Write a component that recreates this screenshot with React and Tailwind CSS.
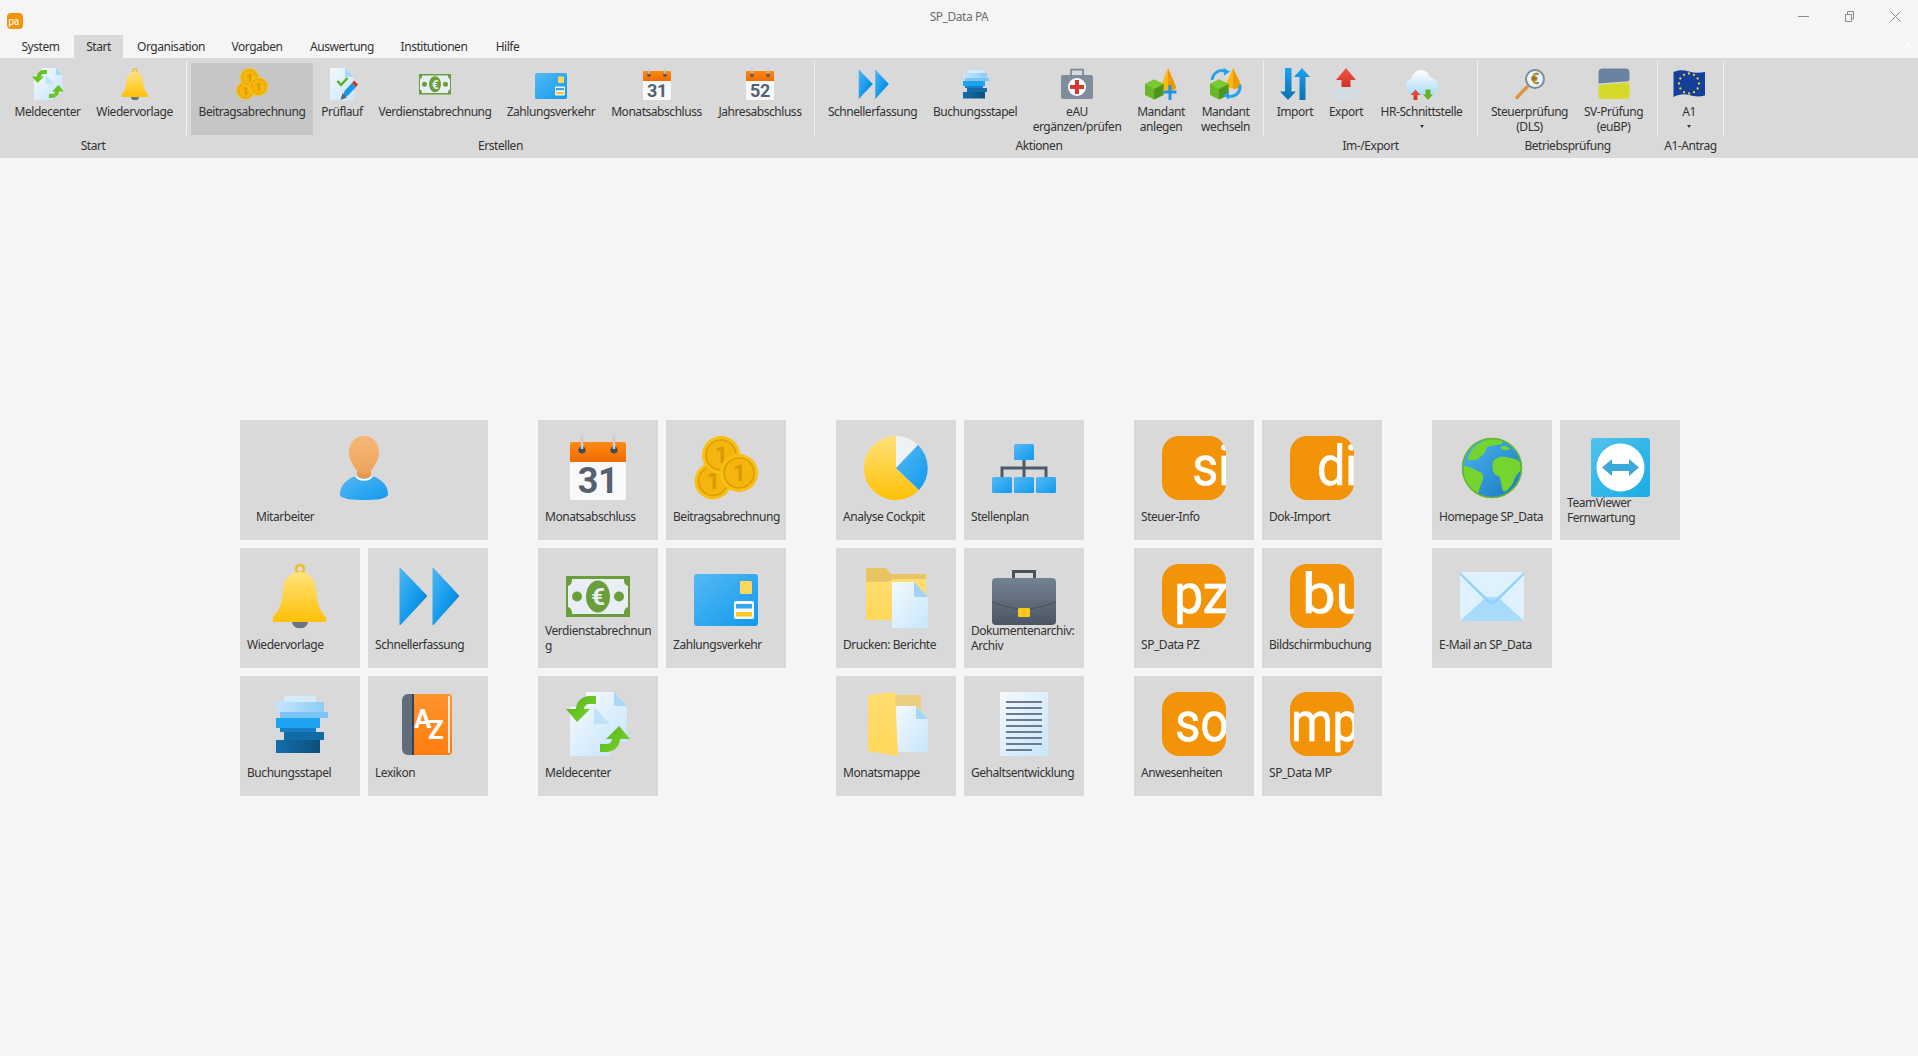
import React from "react";

const Svg = ({ size = 64, children }) => (
  <svg viewBox="0 0 64 64" className={size === 32 ? "w-8 h-8 shrink-0" : "w-16 h-16 shrink-0"}>
    {children}
  </svg>
);

const Defs = () => (
  <svg className="absolute w-0 h-0">
    <defs>
      <linearGradient id="gBlue" x1="0" y1="0" x2="1" y2="1"><stop offset="0" stopColor="#55b9f4" /><stop offset="1" stopColor="#1199ee" /></linearGradient>
      <linearGradient id="gChev" x1="0" y1="0" x2="1" y2="1"><stop offset="0" stopColor="#4fb6f2" /><stop offset="0.55" stopColor="#129aec" /><stop offset="1" stopColor="#0b6fae" /></linearGradient>
      <linearGradient id="gBlueV" x1="0" y1="0" x2="0" y2="1"><stop offset="0" stopColor="#1ba3f0" /><stop offset="1" stopColor="#0c6fb0" /></linearGradient>
      <linearGradient id="gSkin" x1="0" y1="0" x2="0" y2="1"><stop offset="0" stopColor="#f6b877" /><stop offset="1" stopColor="#f0a35c" /></linearGradient>
      <linearGradient id="gBell" x1="0" y1="0" x2="0" y2="1"><stop offset="0" stopColor="#ffe27a" /><stop offset="1" stopColor="#ffc107" /></linearGradient>
      <linearGradient id="gDoc" x1="0" y1="0" x2="1" y2="1"><stop offset="0" stopColor="#f3f9fe" /><stop offset="1" stopColor="#c8e6fb" /></linearGradient>
      <linearGradient id="gFolder" x1="0" y1="0" x2="0" y2="1"><stop offset="0" stopColor="#ffdd70" /><stop offset="1" stopColor="#ffd75a" /></linearGradient>
      <linearGradient id="gGreen" x1="0" y1="0" x2="1" y2="1"><stop offset="0" stopColor="#4fb31a" /><stop offset="1" stopColor="#82d62c" /></linearGradient>
      <linearGradient id="gBook" x1="0" y1="0" x2="0" y2="1"><stop offset="0" stopColor="#ff9430" /><stop offset="1" stopColor="#ff7d0c" /></linearGradient>
      <linearGradient id="gCase" x1="0" y1="0" x2="0" y2="1"><stop offset="0" stopColor="#758292" /><stop offset="1" stopColor="#4b5663" /></linearGradient>
      <linearGradient id="gCloud" x1="0" y1="0" x2="0" y2="1"><stop offset="0" stopColor="#ffffff" /><stop offset="1" stopColor="#a9dcfb" /></linearGradient>
      <linearGradient id="gRed" x1="0" y1="0" x2="0" y2="1"><stop offset="0" stopColor="#f0584c" /><stop offset="1" stopColor="#cf3027" /></linearGradient>
      <linearGradient id="gStackA" x1="0" y1="0" x2="1" y2="0"><stop offset="0" stopColor="#c4e6fc" /><stop offset="1" stopColor="#8ccdf6" /></linearGradient>
      <linearGradient id="gStackB" x1="0" y1="0" x2="1" y2="0"><stop offset="0" stopColor="#126fab" /><stop offset="1" stopColor="#0d4f7d" /></linearGradient>
      <linearGradient id="gGlobe" x1="0" y1="0" x2="1" y2="1"><stop offset="0" stopColor="#4db5f2" /><stop offset="1" stopColor="#1778bd" /></linearGradient>
      <linearGradient id="gTv" x1="0" y1="0" x2="1" y2="1"><stop offset="0" stopColor="#52c2ef" /><stop offset="1" stopColor="#17ace5" /></linearGradient>
      <linearGradient id="gOrangeTop" x1="0" y1="0" x2="0" y2="1"><stop offset="0" stopColor="#fb8a12" /><stop offset="1" stopColor="#f26b00" /></linearGradient>
      <clipPath id="clipLogo"><rect width="64" height="64" rx="17" /></clipPath>
    </defs>
  </svg>
);

const Person = (p) => (
  <Svg {...p}>
    <path d="M24 40C14 43 8 50 8 58C8 63 20 64 32 64C44 64 56 63 56 58C56 50 50 43 40 40Z" fill="url(#gBlue)" />
    <path d="M24 40C27 45 37 45 40 40" fill="none" stroke="#fff" strokeWidth="2" />
    <path d="M25 28H39V40C36 43 28 43 25 40Z" fill="#e8994f" />
    <path d="M32 0C41 0 47 7 47 17C47 25 42 30 38 36C35 38 29 38 26 36C22 30 17 25 17 17C17 7 23 0 32 0Z" fill="url(#gSkin)" />
  </Svg>
);

const Calendar = ({ num = "31", ...p }) => (
  <Svg {...p}>
    <rect x="4" y="6" width="56" height="58" rx="2" fill="#f7f9fb" />
    <path d="M4 26V8a2 2 0 0 1 2-2H58a2 2 0 0 1 2 2V26Z" fill="url(#gOrangeTop)" />
    <circle cx="16" cy="14" r="3.5" fill="#3f4a57" />
    <circle cx="48" cy="14" r="3.5" fill="#3f4a57" />
    <path d="M16 0V13M48 0V13" stroke="#c3ccd6" strokeWidth="2.5" />
    <text x="32" y="57" textAnchor="middle" fontFamily="Roboto, sans-serif" fontWeight="700" fontSize="36" fill="#56616f">{num}</text>
  </Svg>
);

const Coin = ({ cx, cy, r }) => (
  <g>
    <circle cx={cx} cy={cy} r={r} fill="#f8bf14" />
    <circle cx={cx} cy={cy} r={r - 4} fill="#f5b50c" stroke="#dc9d02" strokeWidth="1.6" />
    <text x={cx} y={cy + 8} textAnchor="middle" fontFamily="Roboto, sans-serif" fontWeight="700" fontSize="23" fill="#d89a00">1</text>
  </g>
);

const Coins = (p) => (
  <Svg {...p}>
    <Coin cx={19} cy={45} r={18.5} />
    <Coin cx={27} cy={19} r={19} />
    <Coin cx={45} cy={37} r={19} />
  </Svg>
);

const Bell = (p) => (
  <Svg {...p}>
    <path d="M24 58a8 6.5 0 0 0 16 0Z" fill="#68747f" />
    <circle cx="32" cy="5" r="4" fill="none" stroke="#f6bd1a" strokeWidth="2.5" />
    <path d="M32 8C22 8 16 15 15 26C14 38 12 46 5 53V58H58V53C51 46 49 38 48 26C47 15 41 8 32 8Z" fill="url(#gBell)" />
  </Svg>
);

const Chevrons = (p) => (
  <Svg {...p}>
    <path d="M4 4L31 32L4 61Z" fill="url(#gChev)" stroke="url(#gChev)" strokeWidth="1" strokeLinejoin="round" />
    <path d="M37 4L63 32L37 61Z" fill="url(#gChev)" stroke="url(#gChev)" strokeWidth="1" strokeLinejoin="round" />
  </Svg>
);

const Banknote = (p) => (
  <Svg {...p}>
    <rect x="0" y="12" width="64" height="41" fill="#6a9e3a" />
    <path d="M6 15H58C58 19 59 21 62 22V43C59 44 58 46 58 50H6C6 46 5 44 2 43V22C5 21 6 19 6 15Z" fill="#e8eef3" />
    <ellipse cx="32" cy="32.5" rx="12" ry="16" fill="#699f3a" />
    <circle cx="11" cy="32.5" r="5" fill="#699f3a" />
    <circle cx="53" cy="32.5" r="5" fill="#699f3a" />
    <text x="32" y="41" textAnchor="middle" fontFamily="Roboto, sans-serif" fontWeight="700" fontSize="24" fill="#e8eef3">€</text>
  </Svg>
);

const Card = (p) => (
  <Svg {...p}>
    <rect x="0" y="10" width="64" height="52" rx="3" fill="url(#gBlue)" />
    <rect x="46" y="17" width="12" height="13" rx="1.5" fill="#ffd65c" />
    <rect x="40" y="37" width="20" height="18" rx="2" fill="#f2f8fd" />
    <rect x="42" y="40" width="16" height="4.5" fill="#39a7ee" />
    <rect x="42" y="48" width="16" height="4.5" fill="#ffc828" />
  </Svg>
);

const Stack = (p) => (
  <Svg {...p}>
    <rect x="16" y="4" width="32" height="7" fill="#d3ecfc" />
    <rect x="8" y="10" width="48" height="10" fill="url(#gStackA)" />
    <rect x="12" y="20" width="48" height="6" fill="#7cc6f7" />
    <rect x="8" y="26" width="44" height="10" fill="#1ea3f1" />
    <rect x="12" y="36" width="36" height="4" fill="#157fc6" />
    <rect x="16" y="40" width="40" height="8" fill="#136aa5" />
    <rect x="8" y="48" width="44" height="13" fill="url(#gStackB)" />
  </Svg>
);

const Book = (p) => (
  <Svg {...p}>
    <path d="M12 2H18V63H12A6 6 0 0 1 6 57V8A6 6 0 0 1 12 2Z" fill="#5f6d7c" />
    <rect x="16" y="2" width="2.5" height="61" fill="#39424d" />
    <path d="M18 2H52A4 4 0 0 1 56 6V59A4 4 0 0 1 52 63H18Z" fill="url(#gBook)" />
    <rect x="52" y="4" width="2" height="57" fill="#f5ece2" />
    <text x="18" y="36" fontFamily="Roboto, sans-serif" fontWeight="700" fontSize="26" fill="#fff">A</text>
    <text x="32" y="47" fontFamily="Roboto, sans-serif" fontWeight="700" fontSize="26" fill="#fff">Z</text>
  </Svg>
);

const Meldecenter = (p) => (
  <Svg {...p}>
    <path d="M20 0H48L61 14V50H20Z" fill="url(#gDoc)" />
    <path d="M48 0L61 14H48Z" fill="#a7d8f8" />
    <path d="M4 15H28L44 32V64H4Z" fill="url(#gDoc)" />
    <path d="M28 15L44 32H28Z" fill="#bfe2fa" />
    <path d="M30 4H24C16 4 10 10 10 17H0L11 30L24 17H18C18 14 20 12 24 12H30Z" fill="url(#gGreen)" />
    <path d="M34 60H40C48 60 54 54 54 47H64L53 34L40 47H46C46 50 44 52 40 52H34Z" fill="url(#gGreen)" />
  </Svg>
);

const Pie = (p) => (
  <Svg {...p}>
    <path d="M32 32L32 0A32 32 0 1 0 55 54Z" fill="url(#gBell)" />
    <path d="M32 32L32 0A32 32 0 0 1 54 9Z" fill="#edf2f7" />
    <path d="M32 32L54 9A32 32 0 0 1 55 54Z" fill="url(#gBlue)" />
  </Svg>
);

const OrgChart = (p) => (
  <Svg {...p}>
    <path d="M32 24V41M10 41V32H54V41" fill="none" stroke="#4a5a6a" strokeWidth="3" />
    <rect x="22" y="8" width="20" height="16" rx="1.5" fill="url(#gBlue)" />
    <rect x="0" y="41" width="20" height="16" rx="1.5" fill="url(#gBlue)" />
    <rect x="22" y="41" width="20" height="16" rx="1.5" fill="url(#gBlue)" />
    <rect x="44" y="41" width="20" height="16" rx="1.5" fill="url(#gBlue)" />
  </Svg>
);

const FolderDoc = (p) => (
  <Svg {...p}>
    <path d="M2 4H22L27 10H62V56H2Z" fill="#e9c463" />
    <path d="M2 18H24L29 15H62V56H2Z" fill="url(#gFolder)" />
    <path d="M28 18H50L64 33V64H28Z" fill="url(#gDoc)" />
    <path d="M50 18L64 33H50Z" fill="#9fd4f7" />
  </Svg>
);

const Briefcase = (p) => (
  <Svg {...p}>
    <path d="M21.5 15V7.5H42.5V15" fill="none" stroke="#46535f" strokeWidth="3" />
    <rect x="0" y="14" width="64" height="47" rx="4" fill="url(#gCase)" />
    <path d="M0 38C14 43 24 45 32 45C40 45 50 43 64 38" fill="none" stroke="#434e5a" strokeWidth="1" />
    <rect x="26" y="44" width="12" height="9" rx="1" fill="#ffc61a" />
  </Svg>
);

const FolderOpen = (p) => (
  <Svg {...p}>
    <path d="M30 3H57V40H30Z" fill="#ebcf7e" />
    <path d="M31 14H52L64 27V60H31Z" fill="url(#gDoc)" />
    <path d="M52 14L64 27H52Z" fill="#a4d6f8" />
    <path d="M4 3L31 0L34 64L4 59Z" fill="url(#gFolder)" />
  </Svg>
);

const Paper = (p) => (
  <Svg {...p}>
    <rect x="8" y="0" width="48" height="64" fill="url(#gDoc)" />
    {[9, 15, 21, 27, 33, 39, 45, 51].map((y) => (
      <rect key={y} x="14" y={y} width="36" height="2" fill="#6c7c8c" />
    ))}
    <rect x="14" y="57" width="26" height="2" fill="#6c7c8c" />
  </Svg>
);

const Logo = ({ text, x, w, ...p }) => (
  <Svg {...p}>
    <g clipPath="url(#clipLogo)">
      <rect width="64" height="64" fill="#f39408" />
      <text x={x} y="49" textLength={w} lengthAdjust="spacingAndGlyphs" fontFamily="Roboto, sans-serif" fontSize="56" fill="#fff" stroke="#fff" strokeWidth="0.6">{text}</text>
    </g>
  </Svg>
);

const Globe = (p) => (
  <Svg {...p}>
    <circle cx="32" cy="32" r="30" fill="url(#gGlobe)" />
    <g fill="#76d42e">
      <path d="M12 14C18 6 30 1 42 4C44 7 40 9 36 9C32 10 28 9 26 13C26 17 22 19 18 23C14 25 10 23 8 25C8 20 10 17 12 14Z" />
      <path d="M33 26C35 22 41 20 46 21C50 22 56 22 60 26L61 34C57 38 55 41 53 47C50 52 46 57 43 55C41 50 41 44 39 40C35 40 31 36 33 26Z" />
      <path d="M4 30C8 30 14 33 20 36C24 38 24 42 22 46C20 50 19 54 18 58C12 55 6 48 3 38Z" />
      <path d="M40 11C44 9 48 10 50 13C46 15 42 15 40 11Z" />
    </g>
    <circle cx="32" cy="32" r="29.5" fill="none" stroke="#68b829" strokeWidth="1.5" />
  </Svg>
);

const TeamViewer = (p) => (
  <Svg {...p}>
    <rect x="3" y="2" width="59" height="59" rx="3" fill="url(#gTv)" />
    <circle cx="32.5" cy="31.5" r="24" fill="#fff" />
    <path d="M14 31.5L24 23V28H41V23L51 31.5L41 40V35H24V40Z" fill="#3aa9d8" />
  </Svg>
);

const Mail = (p) => (
  <Svg {...p}>
    <rect x="0" y="8" width="64" height="49" rx="1" fill="#dff1fd" />
    <path d="M0 57L26 33H38L64 57Z" fill="#a9dcfb" />
    <path d="M0 8L28 35Q32 38 36 35L64 8V11L37 38Q32 42 27 38L0 11Z" fill="#93d1f8" />
  </Svg>
);

const Check = (p) => (
  <Svg {...p}>
    <path d="M8 0H38L56 18V64H8Z" fill="url(#gDoc)" />
    <path d="M38 0L56 18H38Z" fill="#a7d8f8" />
    <path d="M23 26L30 34L43 20" fill="none" stroke="#55b31c" strokeWidth="5" />
    <path d="M32 62L37 46L52 30L60 38L45 54Z" fill="#1a96e6" />
    <path d="M52 30L56 25L64 33L60 38Z" fill="#cf3027" />
    <path d="M29 64L33 50L42 59Z" fill="#5a6673" />
  </Svg>
);

const Medkit = (p) => (
  <Svg {...p}>
    <path d="M20 15V3H44V15" fill="none" stroke="#7b8896" strokeWidth="3.5" />
    <rect x="0" y="14" width="64" height="48" rx="4" fill="#7f8c9b" />
    <circle cx="32" cy="38" r="18" fill="#fff" />
    <path d="M28 24H36V34H46V42H36V52H28V42H18V34H28Z" fill="#d8352c" />
  </Svg>
);

const Cube = () => (
  <g>
    <path d="M0 32L18 23L37 32V54L18 63L0 54Z" fill="#6ab82a" />
    <path d="M18 42L37 32V54L18 63Z" fill="#4f9420" />
    <path d="M0 32L18 23L37 32L18 42Z" fill="#79c92f" />
  </g>
);

const MandantNew = (p) => (
  <Svg {...p}>
    <path d="M46 0L63 40Q50 50 30 40Z" fill="#fdb90f" />
    <path d="M46 0L63 40Q56 46 46 46Z" fill="#ee9a05" />
    <Cube />
    <path d="M47 34H53V45H63V51H53V64H47V51H38V45H47Z" fill="#1a96e6" />
  </Svg>
);

const MandantSwap = (p) => (
  <Svg {...p}>
    <path d="M46 0L63 36Q50 46 30 36Z" fill="#fdb90f" />
    <path d="M46 0L63 36Q56 42 46 42Z" fill="#ee9a05" />
    <path d="M4 24C6 10 18 2 30 6" fill="none" stroke="#27a3ee" strokeWidth="6" />
    <path d="M27 0L40 7L28 15Z" fill="#27a3ee" />
    <Cube />
    <path d="M60 34C62 48 50 60 36 56" fill="none" stroke="#27a3ee" strokeWidth="6" />
    <path d="M38 48L26 55L38 63Z" fill="#27a3ee" />
  </Svg>
);

const ImportArrows = (p) => (
  <Svg {...p}>
    <path d="M12 0H25V47H34L18 64L2 47H12Z" fill="url(#gBlueV)" />
    <path d="M46 0L62 18H53V64H41V18H30Z" fill="url(#gBlueV)" />
  </Svg>
);

const ExportArrow = (p) => (
  <Svg {...p}>
    <rect x="8" y="41" width="48" height="23" fill="#d2dde6" />
    <path d="M32 0L52 24H41V38H23V24H12Z" fill="url(#gRed)" />
  </Svg>
);

const Cloud = (p) => (
  <Svg {...p}>
    <path d="M16 54C6 54 0 46 0 36C0 28 5 23 11 22C12 12 20 4 30 4C39 4 46 10 48 19C57 19 64 27 64 36C64 46 57 54 50 54Z" fill="url(#gCloud)" />
    <path d="M19 43L29 54H23V64H15V54H9Z" fill="url(#gRed)" />
    <path d="M39 43H49V53H54L44 64L34 53H39Z" fill="#62b51f" />
  </Svg>
);

const Lens = (p) => (
  <Svg {...p}>
    <path d="M6 59L26 38" stroke="#e0933f" strokeWidth="7" strokeLinecap="round" />
    <circle cx="42" cy="22" r="18" fill="#e9f4fc" stroke="#7a8b9b" strokeWidth="4" />
    <text x="42" y="32" textAnchor="middle" fontFamily="Roboto, sans-serif" fontWeight="700" fontSize="28" fill="#f3b40f" stroke="#4a3c10" strokeWidth="0.8">€</text>
  </Svg>
);

const SvBlocks = (p) => (
  <Svg {...p}>
    <path d="M9 1H55A8 8 0 0 1 63 9V24A8 8 0 0 1 55 27L1 31V9A8 8 0 0 1 9 1Z" fill="#6a83a3" />
    <path d="M9 33L63 29V54A8 8 0 0 1 55 62H9A8 8 0 0 1 1 54V41A8 8 0 0 1 9 33Z" fill="#d4d92a" />
  </Svg>
);

const Flag = (p) => (
  <Svg {...p}>
    <path d="M1 8C12 3 22 4 32 7C42 10 52 10 64 8V55C52 58 42 57 32 54C22 51 12 52 1 58Z" fill="#15409a" />
    {Array.from({ length: 12 }, (_, i) => {
      const a = (i * Math.PI) / 6;
      return <circle key={i} cx={32 + 20 * Math.sin(a)} cy={31 - 20 * Math.cos(a)} r="2.3" fill="#f5cf2c" />;
    })}
  </Svg>
);

const ribbon = [
  {
    label: "Start",
    w: "w-[186px]",
    pl: "pl-[7px]",
    items: [
      { lines: ["Meldecenter"], icon: Meldecenter, w: "w-[81px]" },
      { lines: ["Wiedervorlage"], icon: Bell, w: "w-[93px]" },
    ],
  },
  {
    label: "Erstellen",
    w: "w-[627px]",
    pl: "pl-[4px]",
    items: [
      { lines: ["Beitragsabrechnung"], icon: Coins, w: "w-[122px]", active: true },
      { lines: ["Prüflauf"], icon: Check, w: "w-[58px]" },
      { lines: ["Verdienstabrechnung"], icon: Banknote, w: "w-[128px]" },
      { lines: ["Zahlungsverkehr"], icon: Card, w: "w-[104px]" },
      { lines: ["Monatsabschluss"], icon: Calendar, w: "w-[107px]" },
      { lines: ["Jahresabschluss"], icon: Calendar, num: "52", w: "w-[100px]" },
    ],
  },
  {
    label: "Aktionen",
    w: "w-[448px]",
    pl: "pl-[5px]",
    items: [
      { lines: ["Schnellerfassung"], icon: Chevrons, w: "w-[105px]" },
      { lines: ["Buchungsstapel"], icon: Stack, w: "w-[100px]" },
      { lines: ["eAU", "ergänzen/prüfen"], icon: Medkit, w: "w-[104px]" },
      { lines: ["Mandant", "anlegen"], icon: MandantNew, w: "w-[64px]" },
      { lines: ["Mandant", "wechseln"], icon: MandantSwap, w: "w-[65px]" },
    ],
  },
  {
    label: "Im-/Export",
    w: "w-[213px]",
    pl: "pl-[5px]",
    items: [
      { lines: ["Import"], icon: ImportArrows, w: "w-[52px]" },
      { lines: ["Export"], icon: ExportArrow, w: "w-[50px]" },
      { lines: ["HR-Schnittstelle"], icon: Cloud, w: "w-[101px]", caret: true },
    ],
  },
  {
    label: "Betriebsprüfung",
    w: "w-[179px]",
    pl: "pl-[6px]",
    items: [
      { lines: ["Steuerprüfung", "(DLS)"], icon: Lens, w: "w-[91px]" },
      { lines: ["SV-Prüfung", "(euBP)"], icon: SvBlocks, w: "w-[77px]" },
    ],
  },
  {
    label: "A1-Antrag",
    w: "w-[65px]",
    pl: "pl-[4px]",
    items: [{ lines: ["A1"], icon: Flag, w: "w-[54px]", caret: true }],
  },
];

const tabs = [
  { label: "System", w: "w-[67px]" },
  { label: "Start", w: "w-[49px]", active: true },
  { label: "Organisation", w: "w-[96px]" },
  { label: "Vorgaben", w: "w-[76px]" },
  { label: "Auswertung", w: "w-[94px]" },
  { label: "Institutionen", w: "w-[90px]" },
  { label: "Hilfe", w: "w-[57px]" },
];

const logo = (text, x, w) => (p) => <Logo text={text} x={x} w={w} {...p} />;

const tileGroups = [
  [
    { label: "Mitarbeiter", icon: Person, wide: true },
    { label: "Wiedervorlage", icon: Bell },
    { label: "Schnellerfassung", icon: Chevrons },
    { label: "Buchungsstapel", icon: Stack },
    { label: "Lexikon", icon: Book },
  ],
  [
    { label: "Monatsabschluss", icon: Calendar },
    { label: "Beitragsabrechnung", icon: Coins },
    { label: "Verdienstabrechnung", icon: Banknote, breakWord: true },
    { label: "Zahlungsverkehr", icon: Card },
    { label: "Meldecenter", icon: Meldecenter },
  ],
  [
    { label: "Analyse Cockpit", icon: Pie },
    { label: "Stellenplan", icon: OrgChart },
    { label: "Drucken: Berichte", icon: FolderDoc },
    { label: "Dokumentenarchiv: Archiv", icon: Briefcase },
    { label: "Monatsmappe", icon: FolderOpen },
    { label: "Gehaltsentwicklung", icon: Paper },
  ],
  [
    { label: "Steuer-Info", icon: logo("si", 30, 38) },
    { label: "Dok-Import", icon: logo("di", 27, 40) },
    { label: "SP_Data PZ", icon: logo("pz", 12, 54) },
    { label: "Bildschirmbuchung", icon: logo("bu", 12, 66) },
    { label: "Anwesenheiten", icon: logo("so", 13, 53) },
    { label: "SP_Data MP", icon: logo("mp", 1, 68) },
  ],
  [
    { label: "Homepage SP_Data", icon: Globe },
    { label: "TeamViewer Fernwartung", icon: TeamViewer },
    { label: "E-Mail an SP_Data", icon: Mail },
  ],
];

function RibbonButton({ item }) {
  const Icon = item.icon;
  return (
    <div className={`${item.w} h-[72px] flex flex-col items-center pt-[5px] ${item.active ? "bg-[#c6c6c6]" : ""}`}>
      <Icon size={32} num={item.num} />
      <div className="mt-[4px] text-center whitespace-nowrap">
        {item.lines.map((l) => (
          <div key={l}>{l}</div>
        ))}
      </div>
      {item.caret && <div className="mt-[6px] border-x-[2.5px] border-t-[3px] border-x-transparent border-t-[#333]" />}
    </div>
  );
}

function Tile({ tile }) {
  const Icon = tile.icon;
  return (
    <div className={`h-[120px] bg-[#d9d9d9] flex flex-col pt-4 ${tile.wide ? "col-span-2" : ""}`}>
      <div className="h-[59px] flex justify-center">
        <Icon />
      </div>
      <div className={`mt-auto pb-[16px] ${tile.wide ? "pl-4" : "pl-[7px] pr-[4px]"} ${tile.breakWord ? "break-all" : ""}`}>{tile.label}</div>
    </div>
  );
}

export default function App() {
  return (
    <div className="w-[1918px] h-[1056px] overflow-hidden bg-[#f5f5f5] flex flex-col font-['Noto_Sans',sans-serif] text-[12px] leading-[15px] tracking-[-0.45px] text-[#333]">
      <Defs />

      {/* title bar */}
      <div className="h-[35px] grid grid-cols-[1fr_auto_1fr] shrink-0">
        <div className="pl-[7px] pt-[13px]">
          <div className="w-4 h-4">
            <svg viewBox="0 0 16 16" className="w-4 h-4">
              <rect width="16" height="16" rx="4" fill="#f39408" />
              <text x="1.5" y="11.5" fontFamily="Roboto, sans-serif" fontSize="10" fill="#fff">pa</text>
            </svg>
          </div>
        </div>
        <div className="pt-[9px] text-[#6f6f6f]">SP_Data PA</div>
        <div className="flex justify-end">
          <div className="w-[46px] h-[33px] flex items-center justify-center">
            <svg viewBox="0 0 11 11" className="w-[11px] h-[11px]"><path d="M0 5.5H11" stroke="#8a8a8a" /></svg>
          </div>
          <div className="w-[46px] h-[33px] flex items-center justify-center">
            <svg viewBox="0 0 11 11" className="w-[11px] h-[11px]"><path d="M1.5 3.5H7.5V10.5H1.5ZM3.5 3.5V0.5H9.5V8H7.5" fill="none" stroke="#8a8a8a" /></svg>
          </div>
          <div className="w-[46px] h-[33px] flex items-center justify-center">
            <svg viewBox="0 0 11 11" className="w-[11px] h-[11px]"><path d="M0.5 0.5L10.5 10.5M10.5 0.5L0.5 10.5" stroke="#8a8a8a" /></svg>
          </div>
        </div>
      </div>

      {/* tabs */}
      <div className="h-[23px] flex items-stretch shrink-0 pl-[7px] pr-[6px]">
        {tabs.map((t) => (
          <div key={t.label} className={`${t.w} flex items-center justify-center ${t.active ? "bg-[#d9d9d9]" : ""}`}>
            {t.label}
          </div>
        ))}
        <div className="ml-auto pt-[8px]">
          <svg viewBox="0 0 8 6" className="w-2 h-[6px]"><path d="M1 5L4 1.5L7 5" fill="none" stroke="#fff" strokeWidth="1.5" /></svg>
        </div>
      </div>

      {/* ribbon */}
      <div className="h-[100px] bg-[#d9d9d9] flex shrink-0">
        {ribbon.map((g) => (
          <React.Fragment key={g.label}>
            <div className={`${g.w} pt-[5px]`}>
              <div className={`flex h-[72px] ${g.pl}`}>
                {g.items.map((item) => (
                  <RibbonButton key={item.lines[0]} item={item} />
                ))}
              </div>
              <div className="mt-[3px] text-center whitespace-nowrap">{g.label}</div>
            </div>
            <div className="w-px h-[76px] mt-[3px] bg-[#f0f0f0]" />
          </React.Fragment>
        ))}
      </div>

      {/* start tiles */}
      <div className="flex gap-[50px] pl-[240px] pt-[262px]">
        {tileGroups.map((group, i) => (
          <div key={i} className="grid grid-cols-[120px_120px] auto-rows-[120px] gap-2 content-start">
            {group.map((t) => (
              <Tile key={t.label} tile={t} />
            ))}
          </div>
        ))}
      </div>
    </div>
  );
}
